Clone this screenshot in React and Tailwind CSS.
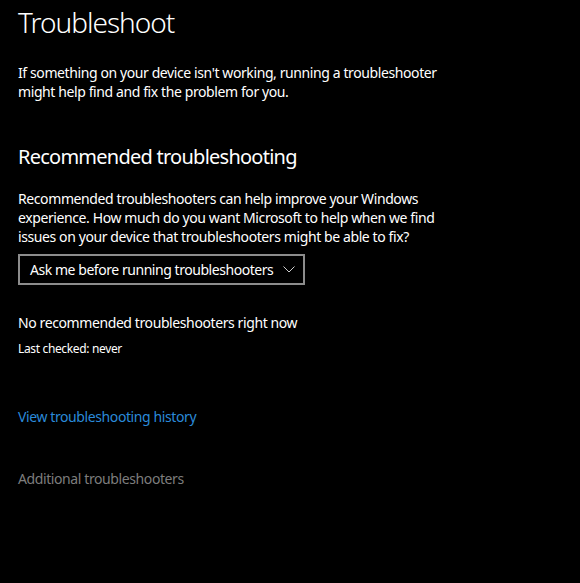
export default function App() {
  return (
    <div className="min-h-[583px] w-[580px] bg-black text-white font-['Noto_Sans',sans-serif] px-[18px] pt-[2px]">
      <h1 className="text-[28px] font-light leading-[40px] tracking-[-1px]">Troubleshoot</h1>

      <p className="mt-[21px] text-[14px] leading-[19px] tracking-[-0.4px] w-[450px]">
        If something on your device isn't working, running a troubleshooter might help find and fix the problem for you.
      </p>

      <h2 className="mt-[42px] text-[20px] leading-[28px] tracking-[-0.75px]">Recommended troubleshooting</h2>

      <p className="mt-[18px] text-[14px] leading-[19px] tracking-[-0.4px] w-[450px]">
        Recommended troubleshooters can help improve your Windows experience. How much do you want Microsoft to help when we find issues on your device that troubleshooters might be able to fix?
      </p>

      <button className="mt-[8px] flex h-[31px] w-[287px] items-center justify-between whitespace-nowrap border-2 border-[#8c8c8c] pl-[10px] pr-[8px] text-[14px] tracking-[-0.45px]">
        <span>Ask me before running troubleshooters</span>
        <svg width="12" height="7" viewBox="0 0 12 7" fill="none" stroke="#cfcfcf" strokeWidth="1">
          <path d="M0.5 0.5 L6 6 L11.5 0.5" />
        </svg>
      </button>

      <p className="mt-[28px] text-[14px] leading-[19px] tracking-[-0.4px]">No recommended troubleshooters right now</p>
      <p className="mt-[9px] text-[12px] leading-[16px] tracking-[-0.35px]">Last checked: never</p>

      <a className="mt-[50px] block text-[14px] leading-[19px] tracking-[-0.4px] text-[#2a8ad9]">View troubleshooting history</a>

      <h3 className="mt-[43px] text-[14px] leading-[20px] tracking-[-0.4px] text-[#7d7d7d]">Additional troubleshooters</h3>
    </div>
  );
}
